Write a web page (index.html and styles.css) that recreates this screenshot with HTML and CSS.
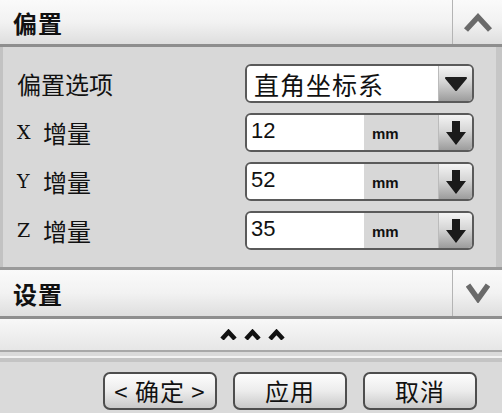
FILE: index.html
```html
<!DOCTYPE html>
<html lang="zh-CN">
<head>
<meta charset="utf-8">
<title>偏置</title>
<link rel="stylesheet" href="styles.css">
</head>
<body>
<div class="panel">
  <div class="sec-head">
    <span class="sec-title">偏置</span>
    <div class="sec-toggle">
      <svg width="30" height="20" viewBox="0 0 30 20"><path d="M3 18 L15 5 L27 18" fill="none" stroke="#6a6a6a" stroke-width="5.5"/></svg>
    </div>
  </div>
  <div class="sec-body">
    <div class="row">
      <span class="label">偏置选项</span>
      <div class="ctrl">
        <span class="field select-text">直角坐标系</span>
        <span class="btn-drop">
          <svg width="24" height="15" viewBox="0 0 24 15"><path d="M2 2 H22 L12 14 Z" fill="#1e1e1e" stroke="#1e1e1e" stroke-width="2" stroke-linejoin="round"/></svg>
        </span>
      </div>
    </div>
    <div class="row">
      <span class="label"><span class="axis">X</span>增量</span>
      <div class="ctrl">
        <span class="field num">12</span>
        <span class="unit">mm</span>
        <span class="btn-drop">
          <svg width="22" height="26" viewBox="0 0 22 26"><path d="M7 1 H15 V12 H21 L11 25 L1 12 H7 Z" fill="#1a1a1a"/></svg>
        </span>
      </div>
    </div>
    <div class="row">
      <span class="label"><span class="axis">Y</span>增量</span>
      <div class="ctrl">
        <span class="field num">52</span>
        <span class="unit">mm</span>
        <span class="btn-drop">
          <svg width="22" height="26" viewBox="0 0 22 26"><path d="M7 1 H15 V12 H21 L11 25 L1 12 H7 Z" fill="#1a1a1a"/></svg>
        </span>
      </div>
    </div>
    <div class="row">
      <span class="label"><span class="axis">Z</span>增量</span>
      <div class="ctrl">
        <span class="field num">35</span>
        <span class="unit">mm</span>
        <span class="btn-drop">
          <svg width="22" height="26" viewBox="0 0 22 26"><path d="M7 1 H15 V12 H21 L11 25 L1 12 H7 Z" fill="#1a1a1a"/></svg>
        </span>
      </div>
    </div>
  </div>
  <div class="sec-head sec-head2">
    <span class="sec-title">设置</span>
    <div class="sec-toggle">
      <svg width="24" height="20" viewBox="0 0 24 20"><path d="M2 2 L12 16 L22 2" fill="none" stroke="#6a6a6a" stroke-width="5.5"/></svg>
    </div>
  </div>
  <div class="more">
    <svg width="17" height="11" viewBox="0 0 17 11"><path d="M2 10 L8.5 3 L15 10" fill="none" stroke="#111" stroke-width="4.5"/></svg>
    <svg width="17" height="11" viewBox="0 0 17 11"><path d="M2 10 L8.5 3 L15 10" fill="none" stroke="#111" stroke-width="4.5"/></svg>
    <svg width="17" height="11" viewBox="0 0 17 11"><path d="M2 10 L8.5 3 L15 10" fill="none" stroke="#111" stroke-width="4.5"/></svg>
  </div>
  <div class="footer">
    <button class="btn">&lt; 确定 &gt;</button>
    <button class="btn">应用</button>
    <button class="btn">取消</button>
  </div>
</div>
</body>
</html>
```

FILE: styles.css
```css
html, body {
  margin: 0;
  padding: 0;
  background: #dadada;
}
body {
  width: 502px;
  height: 413px;
  overflow: hidden;
  font-family: "Noto Sans CJK SC", "Noto Sans", sans-serif;
  color: #111;
}
.panel {
  display: flex;
  flex-direction: column;
}
.sec-head {
  height: 44px;
  display: flex;
  align-items: stretch;
  background: linear-gradient(#fafafa 0%, #f2f2f2 50%, #dedede 100%);
  border-bottom: 3px solid #8e8e8e;
}
.sec-head2 {
  height: 46px;
  border-top: 3px solid #9a9a9a;
}
.sec-title {
  flex: 1;
  display: flex;
  align-items: center;
  padding-left: 13px;
  font-size: 24px;
  font-weight: 700;
  letter-spacing: 1px;
}
.sec-toggle {
  width: 49px;
  border-left: 1px solid #b4b4b4;
  display: flex;
  align-items: center;
  justify-content: center;
}
.sec-body {
  height: 220px;
  box-sizing: border-box;
  padding: 17px 22px 0 17px;
  background: #d8d8d8;
  border-left: 3px solid #c2c2c2;
  border-right: 6px solid #c6c6c6;
  display: flex;
  flex-direction: column;
  gap: 10px;
}
.row {
  height: 39px;
  display: flex;
  align-items: center;
}
.label {
  width: 228px;
  font-size: 24px;
  line-height: 1;
  display: flex;
  align-items: center;
  margin-left: -3px;
}
.axis {
  font-family: "DejaVu Serif", "Liberation Serif", serif;
  font-size: 19px;
  width: 26px;
}
.ctrl {
  flex: 1;
  height: 39px;
  box-sizing: border-box;
  display: flex;
  border: 2px solid #5a5a5a;
  border-radius: 6px;
  overflow: hidden;
  background: #fff;
  box-shadow: inset 1px 1px 2px rgba(0,0,0,0.3);
}
.field {
  flex: 1;
  display: flex;
  align-items: center;
  background: #fff;
}
.select-text {
  padding-left: 7px;
  font-size: 25px;
  letter-spacing: 1px;
}
.num {
  flex: 0 0 117px;
  padding-left: 4px;
  font-family: "Liberation Sans", Arial, sans-serif;
  font-size: 22px;
  padding-bottom: 4px;
  box-sizing: border-box;
}
.unit {
  flex: 1;
  background: #d7d7d7;
  font-family: "Liberation Sans", Arial, sans-serif;
  font-size: 15px;
  font-weight: 700;
  padding-left: 8px;
  display: flex;
  align-items: flex-end;
  padding-bottom: 8px;
}
.btn-drop {
  width: 33px;
  display: flex;
  align-items: center;
  justify-content: center;
  background: linear-gradient(#f4f4f4 0%, #d6d6d6 45%, #9c9c9c 100%);
  border-left: 1px solid #bbb;
}
.more {
  height: 31px;
  display: flex;
  align-items: center;
  justify-content: center;
  gap: 7px;
  padding-left: 2px;
  background: linear-gradient(#f8f8f8, #e6e6e6);
  border-bottom: 2px solid #a8a8a8;
}
.footer {
  flex: 1;
  height: 61px;
  border-top: 2px solid #f2f2f2;
  box-shadow: inset 0 4px 0 #c4c4c4;
  margin-top: 4px;
  background: #dadada;
  display: flex;
  align-items: flex-start;
  padding-top: 14px;
  padding-left: 103px;
  gap: 16px;
}
.btn {
  width: 114px;
  height: 38px;
  border: 2px solid #4e4e4e;
  border-radius: 7px;
  background: linear-gradient(#fdfdfd 0%, #ececec 50%, #c9c9c9 100%);
  font-family: "Noto Sans CJK SC", sans-serif;
  font-size: 24px;
  line-height: 1;
  color: #111;
  padding: 0;
  display: flex;
  align-items: center;
  justify-content: center;
  letter-spacing: 1px;
}
```
